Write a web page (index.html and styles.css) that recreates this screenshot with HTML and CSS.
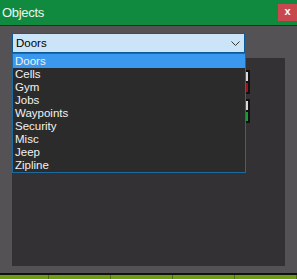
FILE: index.html
```html
<!DOCTYPE html>
<html>
<head>
<meta charset="utf-8">
<link rel="stylesheet" href="styles.css">
</head>
<body>
<div class="window">
  <div class="titlebar">
    <span class="title">Objects</span>
    <span class="close">x</span>
  </div>
  <div class="content">
    <div class="select">
      <span>Doors</span>
      <svg class="chev" width="9" height="5" viewBox="0 0 9 5"><polyline points="0.5,0.5 4.5,4.5 8.5,0.5" fill="none" stroke="#333" stroke-width="1"/></svg>
    </div>
    <div class="panel">
      <div class="tool tool-red"><i class="top"></i><i class="bot"></i></div>
      <div class="tool tool-green"><i class="top"></i><i class="bot"></i></div>
    </div>
    <ul class="list">
      <li class="sel">Doors</li>
      <li>Cells</li>
      <li>Gym</li>
      <li>Jobs</li>
      <li>Waypoints</li>
      <li>Security</li>
      <li>Misc</li>
      <li>Jeep</li>
      <li>Zipline</li>
    </ul>
  </div>
</div>
<div class="bottombar">
  <span></span><span></span><span></span><span></span><span></span>
</div>
</body>
</html>
```
FILE: styles.css
```css
html, body {
  margin: 0;
  padding: 0;
}
body {
  width: 297px;
  height: 279px;
  overflow: hidden;
  background: #1d1d1d;
  font-family: "Liberation Sans", Arial, sans-serif;
}
.window {
  background: #545254;
  height: 273px;
}
.titlebar {
  height: 25px;
  background: #0f8a3f;
  border-bottom: 1px solid #262626;
  display: flex;
  align-items: flex-start;
}
.title {
  color: #eef5ee;
  font-size: 13px;
  letter-spacing: -0.3px;
  line-height: 25px;
  padding-left: 2px;
}
.close {
  margin-left: auto;
  margin-top: 4px;
  width: 19px;
  height: 17px;
  background: #c9474f;
  color: #fff;
  font-weight: bold;
  font-size: 11px;
  line-height: 15px;
  text-align: center;
}
.content {
  position: relative;
  padding: 7px 0 0 12px;
}
.select {
  box-sizing: border-box;
  width: 233px;
  height: 20px;
  background: #cce4f7;
  border: 1px solid #0a5a9c;
  display: flex;
  align-items: center;
  padding: 0 0 0 3px;
  font-size: 11.5px;
  color: #000;
}
.chev {
  margin-left: auto;
  margin-right: 4px;
}
.panel {
  position: relative;
  margin-top: 5px;
  width: 273px;
  height: 208px;
  background: #333133;
}
.tool {
  position: absolute;
  left: 218px;
  width: 20px;
  background: #111;
  display: flex;
  flex-direction: column;
  padding: 2px;
  box-sizing: border-box;
}
.tool-red { top: 12px; height: 24px; }
.tool-green { top: 41px; height: 24px; }
.tool .top {
  display: block;
  height: 9px;
  background: #d8d8d8;
  margin-bottom: 2px;
}
.tool .bot {
  display: block;
  flex: 1;
}
.tool-red .bot { background: #a0111c; }
.tool-green .bot { background: #1a9a3a; }
.list {
  position: absolute;
  left: 12px;
  top: 27px;
  box-sizing: border-box;
  width: 234px;
  height: 120px;
  margin: 0;
  padding: 0;
  list-style: none;
  background: #2b2b2b;
  border: 1px solid #1d6aa0;
}
.list li {
  height: 13px;
  line-height: 13px;
  font-size: 11.5px;
  color: #f2f2f2;
  padding-left: 2px;
}
.list li.sel {
  background: #3a98ef;
  height: 14px;
  line-height: 14px;
}
.bottombar {
  border-top: 2px solid #111;
  height: 4px;
  background: #6f9c14;
  display: flex;
}
.bottombar span {
  width: 64px;
  border-right: 1px solid #4d6e0c;
  box-sizing: border-box;
}
.bottombar span:first-child {
  width: 51px;
}
```
